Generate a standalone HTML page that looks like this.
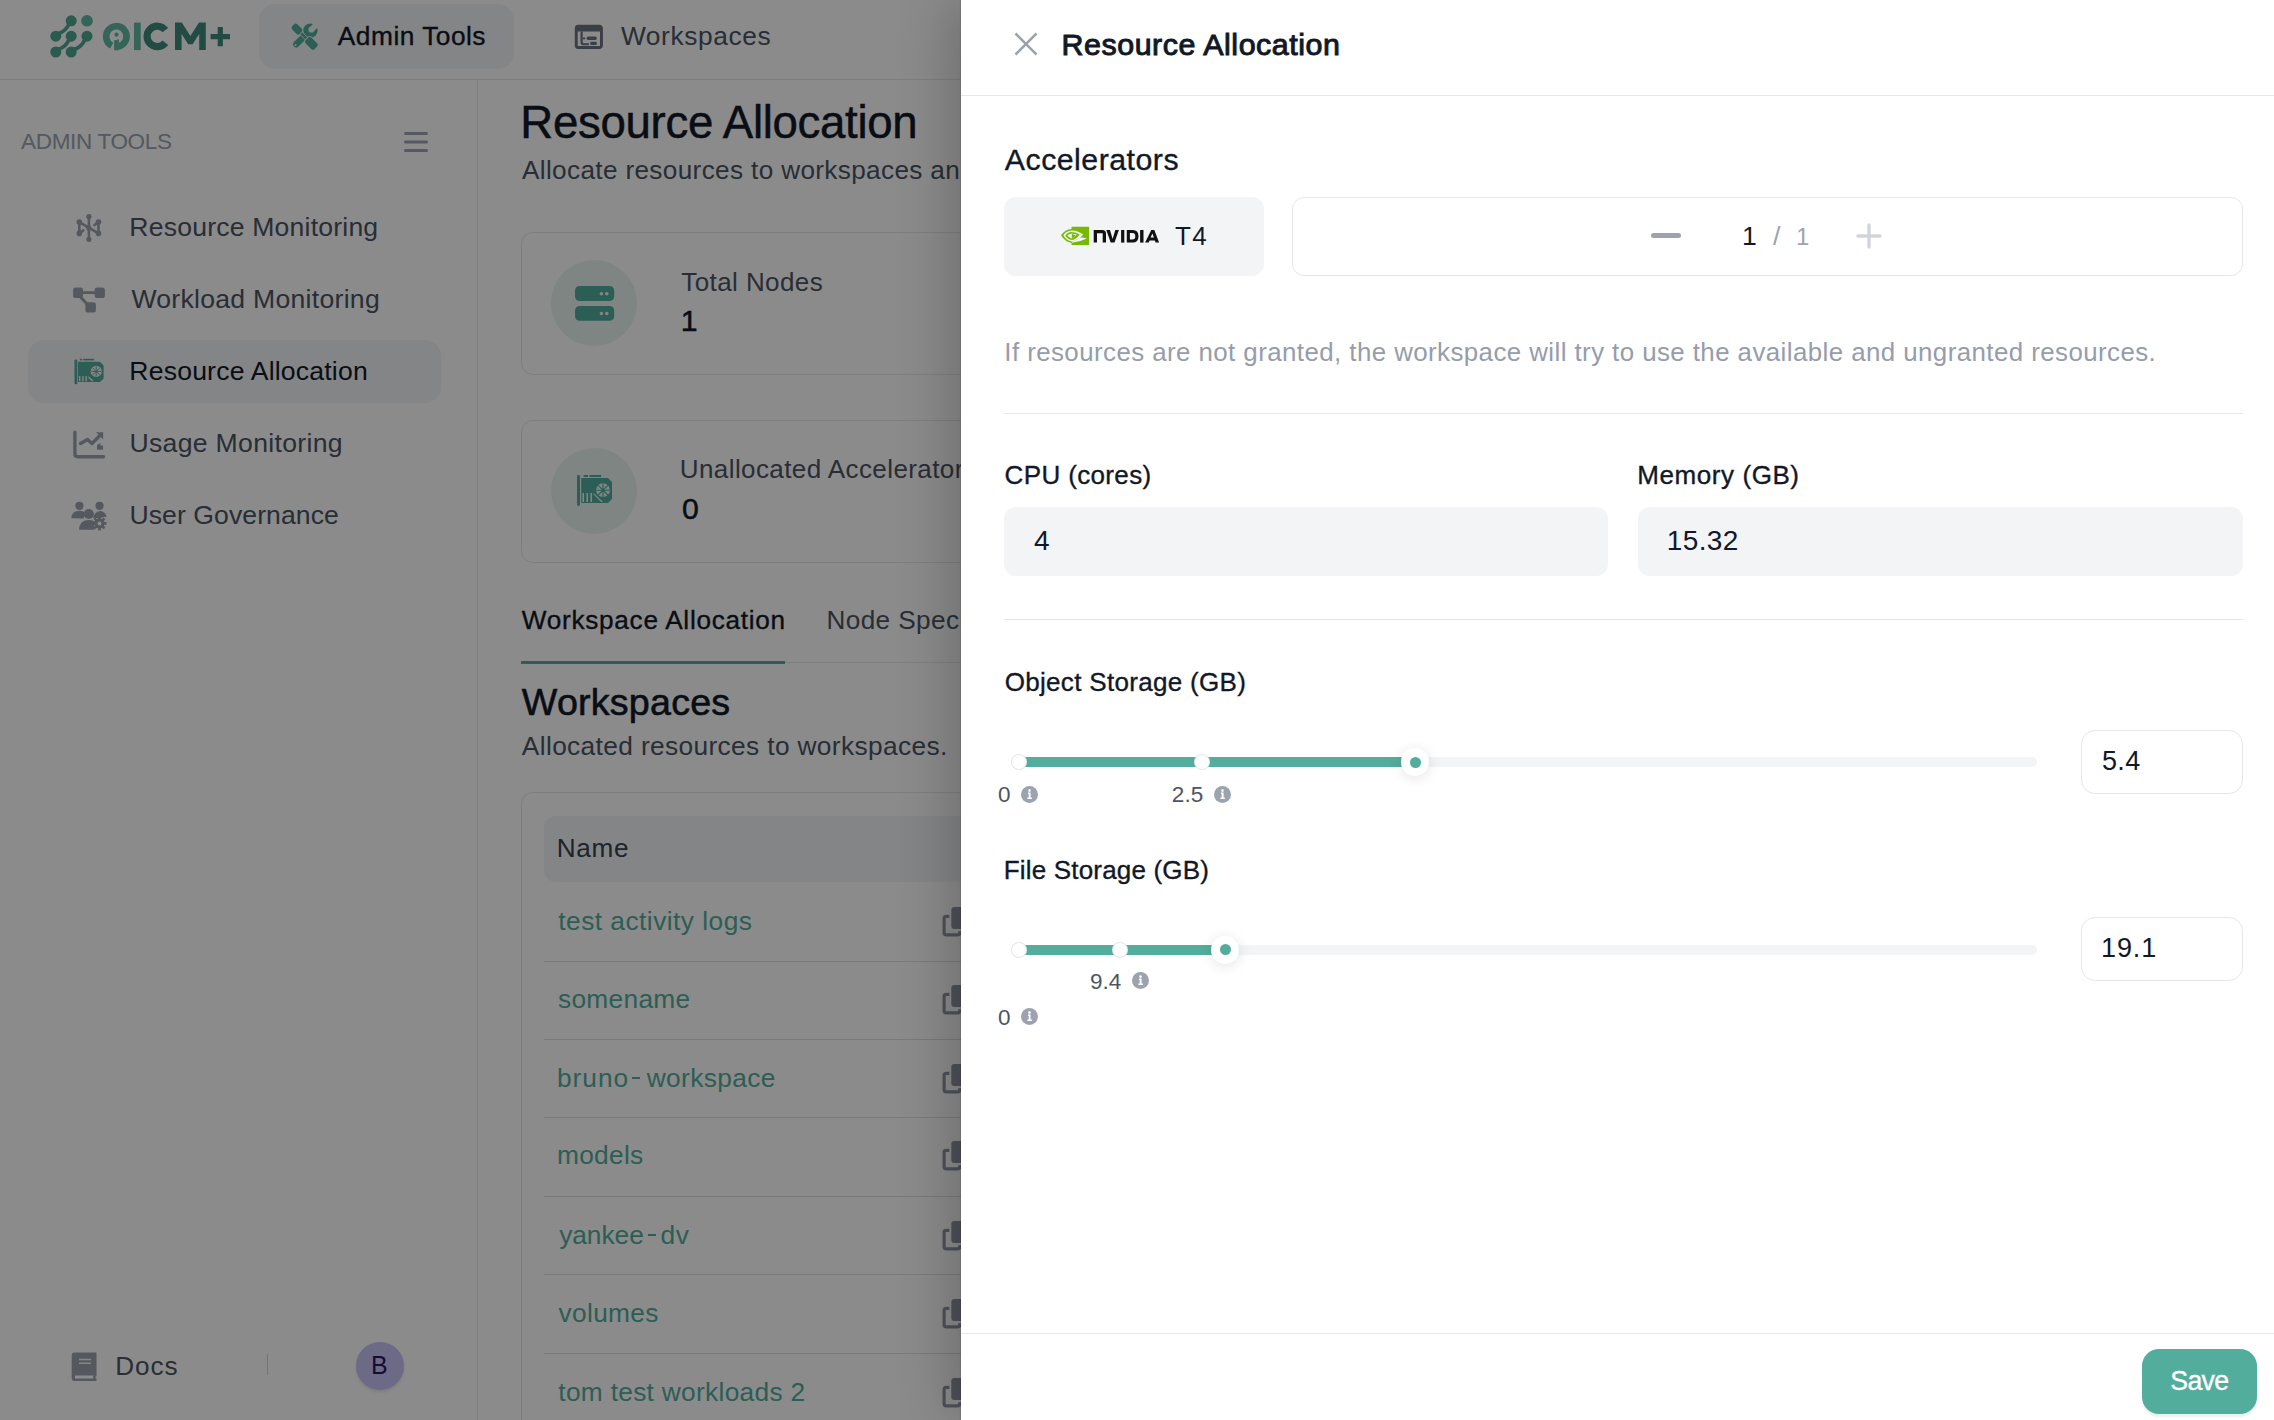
<!DOCTYPE html>
<html><head><meta charset="utf-8"><title>Resource Allocation</title>
<style>
html,body{margin:0;padding:0;width:2274px;height:1420px;overflow:hidden;background:#fff;font-family:"Liberation Sans",sans-serif;}
.abs{position:absolute;}
.t{position:absolute;white-space:nowrap;}
#page{position:absolute;left:0;top:0;width:2274px;height:1420px;overflow:hidden;background:#fff;}
#drawer{position:absolute;left:961px;top:0;width:1313px;height:1420px;background:#fff;box-shadow:-12px 0 50px rgba(0,0,0,0.2),-1px 0 1px rgba(0,0,0,0.07);overflow:hidden;}
</style></head><body>
<div id="page"><div class="abs" style="left:0;top:79px;width:2274px;height:1px;background:#e5e7eb"></div><svg class="abs" style="left:40px;top:5px" width="200" height="65" viewBox="40 5 200 65">
<g fill="#4fa592">
<circle cx="71.2" cy="20.8" r="5.5"/><circle cx="55.8" cy="36.2" r="5.5"/><circle cx="71.2" cy="36.2" r="5.5"/><circle cx="87" cy="36.2" r="5.5"/>
<circle cx="55.8" cy="52" r="5.5"/><circle cx="71.2" cy="52" r="5.5"/>
</g>
<circle cx="87" cy="20.8" r="5.8" fill="#62b8a4"/>
<g stroke="#4fa592" stroke-width="3.6" fill="none" stroke-linecap="round">
<path d="M69 24 Q 66 31, 58.5 33.5"/><path d="M69 39.5 Q 66 47, 58.5 49.3"/><path d="M84.8 39.5 Q 82 47, 74.2 49.3"/>
</g>
<g fill="none" stroke="#62b8a4" stroke-width="6.6">
<path d="M111.77 45.63 A10.25 10.25 0 1 1 118 46.6"/>
</g>
<g fill="#62b8a4">
<path d="M114.1 40.6 L118.9 39.2 V50.3 H114.1z"/>
<circle cx="116.5" cy="34.7" r="2.1"/>
<rect x="134" y="22.6" width="6.7" height="27.5"/>
</g>
<g fill="#3f8c7b">
<path d="M165.34 30.12 A10.2 10.2 0 1 0 165.34 42.68" fill="none" stroke="#3f8c7b" stroke-width="7.2"/>
<path d="M175 50.1 V22.6 H181.8 L190.4 36 L199 22.6 H205.8 V50.1 H199.2 V34 L192.6 44.2 H188.2 L181.6 34 V50.1z"/>
<path d="M217.7 27 h5.2 v7.05 h7.1 v5.2 h-7.1 v7.05 h-5.2 v-7.05 h-7.1 v-5.2 h7.1z"/>
</g>
</svg><div class="abs" style="left:259px;top:4px;width:255px;height:65px;border-radius:16px;background:#f3f4f6"></div><svg class="abs" style="left:290px;top:22px" width="30" height="30" viewBox="0 0 30 30">
<g fill="#52ad9c">
<rect x="-8.2" y="-3.2" width="16.4" height="6.4" rx="3.2" transform="translate(9.8 18.8) rotate(-45)"/>
<circle cx="20.4" cy="8.6" r="7.2"/>
</g>
<g fill="#f3f4f6">
<circle cx="21.3" cy="7.7" r="2.9"/>
<path d="M19.25 5.65 L23.35 9.75 L29.7 3.4 L25.6 -0.7z"/>
<circle cx="5.6" cy="23" r="1.1"/>
</g>
<g fill="#52ad9c" stroke="#f3f4f6" stroke-width="1.6" style="paint-order:stroke">
<rect x="-5.4" y="-3.6" width="10.8" height="7.2" rx="2.2" transform="translate(7 7.1) rotate(45)"/>
<rect x="-6.3" y="-4.1" width="12.6" height="8.2" rx="2.4" transform="translate(21.4 21.3) rotate(45)"/>
</g>
<rect x="-3.6" y="-1.3" width="7.2" height="2.6" transform="translate(13.7 13.8) rotate(45)" fill="#52ad9c" stroke="#f3f4f6" stroke-width="1.4" style="paint-order:stroke"/>
</svg><div class="t" style="left:337.85px;top:22.80px;font-size:26.31px;line-height:26px;color:#111827;letter-spacing:0.488px;-webkit-text-stroke:0.35px currentColor;">Admin Tools</div>
<svg class="abs" style="left:574px;top:24px" width="30" height="26" viewBox="0 0 30 26">
<g fill="#6b7280">
<path fill-rule="evenodd" d="M4 0.7 H25 Q28.9 0.7 28.9 4.6 V21 Q28.9 24.9 25 24.9 H4 Q0.8 24.9 0.8 21 V4.6 Q0.8 0.7 4 0.7z M3.7 7.5 V22 H26 V7.5z"/>
<path d="M6.5 7.5 h2.2 v10.5 q0 1.2 1.2 1.2 h5 v2 h-5.5 q-2.9 0 -2.9 -2.9z"/>
<path d="M8.7 13.5 h2.5 v1.8 h-2.5z"/>
<rect x="12.6" y="12.6" width="10.2" height="3.3" rx="1.6"/>
<rect x="16.2" y="17.8" width="6.6" height="3.2" rx="1.2"/>
</g></svg><div class="t" style="left:620.88px;top:22.80px;font-size:26.31px;line-height:26px;color:#4b5563;letter-spacing:0.623px;">Workspaces</div>
<div class="abs" style="left:477px;top:80px;width:1px;height:1340px;background:#e5e7eb"></div><div class="t" style="left:21.06px;top:129.70px;font-size:22.53px;line-height:23px;color:#9ca3af;letter-spacing:-0.343px;">ADMIN TOOLS</div>
<svg class="abs" style="left:403px;top:130px" width="26" height="24" viewBox="0 0 26 24"><g stroke="#9ca3af" stroke-width="3" stroke-linecap="round"><path d="M2.5 3.5h21M2.5 12h21M2.5 20.5h21"/></g></svg><div class="abs" style="left:28px;top:340px;width:413px;height:63px;border-radius:16px;background:#f3f4f6"></div><div class="t" style="left:129.32px;top:213.50px;font-size:26.60px;line-height:27px;color:#4b5563;letter-spacing:0.193px;">Resource Monitoring</div>
<div class="t" style="left:131.38px;top:285.50px;font-size:26.60px;line-height:27px;color:#4b5563;letter-spacing:0.272px;">Workload Monitoring</div>
<div class="t" style="left:129.32px;top:357.50px;font-size:26.60px;line-height:27px;color:#111827;letter-spacing:0.184px;">Resource Allocation</div>
<div class="t" style="left:129.45px;top:429.50px;font-size:26.60px;line-height:27px;color:#4b5563;letter-spacing:0.320px;">Usage Monitoring</div>
<div class="t" style="left:129.45px;top:501.50px;font-size:26.60px;line-height:27px;color:#4b5563;letter-spacing:0.070px;">User Governance</div>
<svg class="abs" style="left:70px;top:210px" width="40" height="36" viewBox="70 210 40 36">
<g fill="#9ca3af" stroke="#9ca3af" stroke-width="2.6" stroke-linecap="round">
<circle cx="88.9" cy="216.5" r="2.6" stroke="none"/><circle cx="88.9" cy="239.3" r="2.6" stroke="none"/>
<circle cx="79.3" cy="222.1" r="2.8" stroke="none"/><circle cx="79.3" cy="233.4" r="2.8" stroke="none"/>
<circle cx="98.5" cy="222.1" r="2.8" stroke="none"/><circle cx="98.5" cy="233.4" r="2.8" stroke="none"/>
<circle cx="88.9" cy="227.9" r="2.6" stroke="none"/>
<path d="M88.9 216.5V239.3M79.3 222.1L98.5 233.4M79.3 222.1V233.4M98.5 222.1V233.4M79.3 233.4l4 -3M98.5 222.1l-4 3" fill="none"/>
</g></svg><svg class="abs" style="left:70px;top:284px" width="40" height="32" viewBox="70 284 40 32">
<g fill="#9ca3af">
<rect x="73.1" y="287.5" width="9.9" height="10.5" rx="2.6"/><rect x="94.7" y="287.5" width="10.2" height="10.5" rx="2.6"/>
<rect x="85.4" y="302.3" width="10.5" height="10.2" rx="2.6"/>
<rect x="80" y="291.2" width="17" height="2.8"/>
</g>
<path d="M79.5 296 L88 305" stroke="#9ca3af" stroke-width="3" fill="none"/>
</svg><svg class="abs" style="left:72px;top:356px" width="36" height="32" viewBox="72 356 36 32">
<g fill="#52ad9c">
<rect x="74.5" y="359.4" width="2.8" height="24.8" rx="1.2"/>
<rect x="79.8" y="358.8" width="2.4" height="1.6"/><rect x="83.2" y="358.8" width="11" height="1.6"/>
<path fill-rule="evenodd" d="M78 361.8 H100 L103.6 365.5 V378.5 L100 382.1 H78z M96.2 371.4 m-5.6 0 a5.6 5.6 0 1 0 11.2 0 a5.6 5.6 0 1 0 -11.2 0z M79 376 v5.2 h1.4 v-5.2z M82.3 376 v5.2 h1.4 v-5.2z M85.5 376 v5.2 h1.4 v-5.2z M88.5 376 v2 l3.3 3.2 h2z"/>
<g stroke="#52ad9c" stroke-width="0.9"><path d="M96.2 366.5v9.8M91.3 371.4h9.8M92.7 367.9l7 7M99.7 367.9l-7 7"/></g>
</g></svg><svg class="abs" style="left:70px;top:428px" width="38" height="34" viewBox="70 428 38 34">
<g fill="none" stroke="#9ca3af" stroke-width="3.4" stroke-linecap="round" stroke-linejoin="round">
<path d="M74.9 432.2 V453.5 Q74.9 456.7 78 456.7 H103.5"/>
<path d="M80.5 443.5 L87.5 439.5 L92 443.5 L101 434.5"/>
</g>
<g fill="#9ca3af"><path d="M96 432.3 h7.2 v7.2z"/><path d="M97 445 l3.5 -2 v2.6 h2.6 v4.2 h-6.1z"/></g>
</svg><svg class="abs" style="left:68px;top:498px" width="42" height="36" viewBox="68 498 42 36">
<g fill="#9ca3af">
<circle cx="79.4" cy="505.8" r="4.1"/><circle cx="99.5" cy="505.8" r="4.1"/><circle cx="88.8" cy="514" r="5.1"/>
<path d="M71.2 518.2 Q72 510.8 79.4 510.8 Q84 510.8 85.5 514 Q83 518.5 84 518.5z"/>
<path d="M79 529.8 Q79.5 520 88.8 520 Q93.5 520 95.5 522 Q93.2 526 94.5 529.8z"/>
<path d="M93 518.2 Q94 512.5 99.5 511 Q104.8 511 106.7 516.5 L100 518z"/>
</g>
<g transform="translate(99.5 523.4)" fill="#9ca3af">
<circle r="5"/>
<g stroke="#9ca3af" stroke-width="2.6"><path d="M0 -7V7M-7 0H7M-5 -5L5 5M5 -5L-5 5"/></g>
<circle r="2" fill="#ffffff"/>
</g></svg><svg class="abs" style="left:70px;top:1350px" width="30" height="34" viewBox="70 1350 30 34">
<g fill="#9ca3af"><path fill-rule="evenodd" d="M74.5 1352.5 H96.5 V1376 Q94 1377 96.5 1378.5 V1381 H74.5 Q71.7 1381 71.7 1378 V1355.5 Q71.7 1352.5 74.5 1352.5z M75 1375.5 v3 h18.5 q-1 -1.5 0 -3z"/></g>
<g stroke="#f3f4f6" stroke-width="1.6"><path d="M79 1359.5h12M79 1363.2h12"/></g>
</svg><div class="t" style="left:115.25px;top:1353.00px;font-size:26.16px;line-height:26px;color:#4b5563;letter-spacing:0.928px;">Docs</div>
<div class="abs" style="left:267px;top:1354px;width:1px;height:21px;background:#d1d5db"></div><div class="abs" style="left:356px;top:1342px;width:48px;height:48px;border-radius:50%;background:#c9c3f7;box-shadow:0 2px 3px rgba(0,0,0,0.1)"></div><div class="t" style="left:370.95px;top:1353.00px;font-size:25.00px;line-height:25px;color:#271763;">B</div>
<div class="t" style="left:520.36px;top:100.30px;font-size:45.64px;line-height:46px;color:#111827;letter-spacing:-0.332px;-webkit-text-stroke:0.5px currentColor;">Resource Allocation</div>
<div class="t" style="left:521.95px;top:157.00px;font-size:26.16px;line-height:26px;color:#4b5563;letter-spacing:0.35px;">Allocate resources to workspaces and users.</div>
<div class="abs" style="left:521px;top:232px;width:700px;height:143px;border:1px solid #e5e7eb;border-radius:12px;box-sizing:border-box"></div><div class="abs" style="left:551px;top:260px;width:86px;height:86px;border-radius:50%;background:#e8f5f1"></div><div class="t" style="left:681.22px;top:268.70px;font-size:26.02px;line-height:26px;color:#4b5563;letter-spacing:0.413px;">Total Nodes</div>
<div class="t" style="left:680.80px;top:306.20px;font-size:30.23px;line-height:30px;color:#111827;-webkit-text-stroke:0.5px currentColor;">1</div>
<div class="abs" style="left:521px;top:419.7px;width:700px;height:143px;border:1px solid #e5e7eb;border-radius:12px;box-sizing:border-box"></div><div class="abs" style="left:551px;top:447.7px;width:86px;height:86px;border-radius:50%;background:#e8f5f1"></div><div class="t" style="left:679.79px;top:456.40px;font-size:26.02px;line-height:26px;color:#4b5563;letter-spacing:0.4px;">Unallocated Accelerators</div>
<div class="t" style="left:681.92px;top:493.90px;font-size:30.23px;line-height:30px;color:#111827;-webkit-text-stroke:0.5px currentColor;">0</div>
<svg class="abs" style="left:570px;top:282px" width="50" height="44" viewBox="570 282 50 44">
<g fill="#52ad9c">
<path fill-rule="evenodd" d="M580 286 H609 Q614.2 286 614.2 291 V296 Q614.2 301 609 301 H580 Q575 301 575 296 V291 Q575 286 580 286z M601.4 293.7 m-1.8 0 a1.8 1.8 0 1 0 3.6 0 a1.8 1.8 0 1 0 -3.6 0z M606.8 293.7 m-1.8 0 a1.8 1.8 0 1 0 3.6 0 a1.8 1.8 0 1 0 -3.6 0z"/>
<path fill-rule="evenodd" d="M580 306 H609 Q614.2 306 614.2 311 V316 Q614.2 320.8 609 320.8 H580 Q575 320.8 575 316 V311 Q575 306 580 306z M601.4 313.5 m-1.8 0 a1.8 1.8 0 1 0 3.6 0 a1.8 1.8 0 1 0 -3.6 0z M606.8 313.5 m-1.8 0 a1.8 1.8 0 1 0 3.6 0 a1.8 1.8 0 1 0 -3.6 0z"/>
</g></svg><svg class="abs" style="left:572px;top:470px" width="46" height="40" viewBox="572 470 46 40">
<g fill="#52ad9c">
<rect x="577" y="475.1" width="3" height="30.7" rx="1.3"/>
<rect x="583.6" y="475" width="4.4" height="2"/><rect x="589.5" y="475" width="11.7" height="2"/>
<path fill-rule="evenodd" d="M581.2 478 H608 L612 482 V499 L608 503 H581.2z M603 490.2 m-6.9 0 a6.9 6.9 0 1 0 13.8 0 a6.9 6.9 0 1 0 -13.8 0z M582.4 493 v9 h1.6 v-9z M586.4 493 v9 h1.6 v-9z M590.4 493 v9 h1.6 v-9z M593.6 493 v1.5 l7.5 7.5 h2z"/>
<g stroke="#52ad9c" stroke-width="1.1"><path d="M603 483.5v13.4M596.3 490.2h13.4M598.2 485.4l9.6 9.6M607.8 485.4l-9.6 9.6"/></g>
</g></svg><div class="t" style="left:521.79px;top:606.70px;font-size:26.16px;line-height:26px;color:#111827;letter-spacing:0.725px;-webkit-text-stroke:0.35px currentColor;">Workspace Allocation</div>
<div class="t" style="left:826.45px;top:606.70px;font-size:26.16px;line-height:26px;color:#4b5563;letter-spacing:0.4px;">Node Specifications</div>
<div class="abs" style="left:521px;top:661.5px;width:700px;height:1px;background:#e5e7eb"></div><div class="abs" style="left:521px;top:660.5px;width:264px;height:3.5px;background:#52ad9c"></div><div class="t" style="left:521.83px;top:682.90px;font-size:37.65px;line-height:38px;color:#111827;letter-spacing:0.211px;-webkit-text-stroke:0.6px currentColor;">Workspaces</div>
<div class="t" style="left:521.85px;top:732.80px;font-size:26.31px;line-height:26px;color:#4b5563;letter-spacing:0.356px;">Allocated resources to workspaces.</div>
<div class="abs" style="left:521px;top:792px;width:700px;height:700px;border:1px solid #e5e7eb;border-radius:12px;box-sizing:border-box"></div><div class="abs" style="left:544px;top:815.5px;width:700px;height:66.5px;border-radius:12px;background:#f3f4f6"></div><div class="t" style="left:556.85px;top:834.50px;font-size:26.16px;line-height:26px;color:#374151;letter-spacing:0.607px;">Name</div>
<div class="abs" style="left:544px;top:961px;width:700px;height:1px;background:#dcdfe5"></div><div class="abs" style="left:544px;top:1039px;width:700px;height:1px;background:#dcdfe5"></div><div class="abs" style="left:544px;top:1117px;width:700px;height:1px;background:#dcdfe5"></div><div class="abs" style="left:544px;top:1196px;width:700px;height:1px;background:#dcdfe5"></div><div class="abs" style="left:544px;top:1274px;width:700px;height:1px;background:#dcdfe5"></div><div class="abs" style="left:544px;top:1353px;width:700px;height:1px;background:#dcdfe5"></div><div class="t" style="left:558.30px;top:908.00px;font-size:26.30px;line-height:26px;color:#52ad9c;letter-spacing:0.472px;">test activity logs</div>
<svg class="abs" style="left:940px;top:907.1px" width="30" height="32" viewBox="0 0 30 32">
<path d="M9.4 9.3 H6.2 Q4.1 9.3 4.1 11.4 V25.7 Q4.1 27.8 6.2 27.8 H17.6 Q19.7 27.8 19.7 25.7 V24.3" fill="none" stroke="#8f96a3" stroke-width="3.2"/>
<rect x="11.3" y="0" width="20" height="22" rx="3" fill="#8f96a3"/></svg><div class="t" style="left:557.97px;top:986.00px;font-size:26.30px;line-height:26px;color:#52ad9c;letter-spacing:0.3px;">somename</div>
<svg class="abs" style="left:940px;top:985.1px" width="30" height="32" viewBox="0 0 30 32">
<path d="M9.4 9.3 H6.2 Q4.1 9.3 4.1 11.4 V25.7 Q4.1 27.8 6.2 27.8 H17.6 Q19.7 27.8 19.7 25.7 V24.3" fill="none" stroke="#8f96a3" stroke-width="3.2"/>
<rect x="11.3" y="0" width="20" height="22" rx="3" fill="#8f96a3"/></svg><div class="t" style="left:557.00px;top:1064.60px;font-size:26.30px;line-height:26px;color:#52ad9c;letter-spacing:0.959px;">bruno</div>
<div class="abs" style="left:631.9px;top:1077.0px;width:8.2px;height:2.3px;background:#52ad9c"></div><div class="t" style="left:646.74px;top:1064.60px;font-size:26.30px;line-height:26px;color:#52ad9c;letter-spacing:0.378px;">workspace</div>
<svg class="abs" style="left:940px;top:1063.6999999999998px" width="30" height="32" viewBox="0 0 30 32">
<path d="M9.4 9.3 H6.2 Q4.1 9.3 4.1 11.4 V25.7 Q4.1 27.8 6.2 27.8 H17.6 Q19.7 27.8 19.7 25.7 V24.3" fill="none" stroke="#8f96a3" stroke-width="3.2"/>
<rect x="11.3" y="0" width="20" height="22" rx="3" fill="#8f96a3"/></svg><div class="t" style="left:556.95px;top:1142.00px;font-size:26.30px;line-height:26px;color:#52ad9c;letter-spacing:0.3px;">models</div>
<svg class="abs" style="left:940px;top:1141.1px" width="30" height="32" viewBox="0 0 30 32">
<path d="M9.4 9.3 H6.2 Q4.1 9.3 4.1 11.4 V25.7 Q4.1 27.8 6.2 27.8 H17.6 Q19.7 27.8 19.7 25.7 V24.3" fill="none" stroke="#8f96a3" stroke-width="3.2"/>
<rect x="11.3" y="0" width="20" height="22" rx="3" fill="#8f96a3"/></svg><div class="t" style="left:559.14px;top:1221.70px;font-size:26.30px;line-height:26px;color:#52ad9c;letter-spacing:-0.015px;">yankee</div>
<div class="abs" style="left:648.3px;top:1234.1000000000001px;width:7.6px;height:2.3px;background:#52ad9c"></div><div class="t" style="left:660.40px;top:1221.70px;font-size:26.30px;line-height:26px;color:#52ad9c;letter-spacing:0.817px;">dv</div>
<svg class="abs" style="left:940px;top:1220.8px" width="30" height="32" viewBox="0 0 30 32">
<path d="M9.4 9.3 H6.2 Q4.1 9.3 4.1 11.4 V25.7 Q4.1 27.8 6.2 27.8 H17.6 Q19.7 27.8 19.7 25.7 V24.3" fill="none" stroke="#8f96a3" stroke-width="3.2"/>
<rect x="11.3" y="0" width="20" height="22" rx="3" fill="#8f96a3"/></svg><div class="t" style="left:558.61px;top:1300.00px;font-size:26.30px;line-height:26px;color:#52ad9c;letter-spacing:0.3px;">volumes</div>
<svg class="abs" style="left:940px;top:1299.1px" width="30" height="32" viewBox="0 0 30 32">
<path d="M9.4 9.3 H6.2 Q4.1 9.3 4.1 11.4 V25.7 Q4.1 27.8 6.2 27.8 H17.6 Q19.7 27.8 19.7 25.7 V24.3" fill="none" stroke="#8f96a3" stroke-width="3.2"/>
<rect x="11.3" y="0" width="20" height="22" rx="3" fill="#8f96a3"/></svg><div class="t" style="left:558.30px;top:1379.00px;font-size:26.30px;line-height:26px;color:#52ad9c;letter-spacing:0.3px;">tom test workloads 2</div>
<svg class="abs" style="left:940px;top:1378.1px" width="30" height="32" viewBox="0 0 30 32">
<path d="M9.4 9.3 H6.2 Q4.1 9.3 4.1 11.4 V25.7 Q4.1 27.8 6.2 27.8 H17.6 Q19.7 27.8 19.7 25.7 V24.3" fill="none" stroke="#8f96a3" stroke-width="3.2"/>
<rect x="11.3" y="0" width="20" height="22" rx="3" fill="#8f96a3"/></svg></div><div class="abs" style="left:0;top:0;width:2274px;height:1420px;background:rgba(0,0,0,0.455)"></div><div id="drawer"><svg class="abs" style="left:53.4px;top:32.3px" width="24" height="24" viewBox="0 0 24 24"><path d="M2.4 2.4L21.6 21.6M21.6 2.4L2.4 21.6" stroke="#9ca3af" stroke-width="2.6" stroke-linecap="square"/></svg><div class="t" style="left:100.51px;top:28.90px;font-size:30.38px;line-height:30px;color:#111827;letter-spacing:0.554px;-webkit-text-stroke:1.0px currentColor;">Resource Allocation</div>
<div class="abs" style="left:0;top:95px;width:1313px;height:1px;background:#e5e7eb"></div><div class="t" style="left:43.84px;top:145.35px;font-size:30.31px;line-height:30px;color:#111827;letter-spacing:0.484px;-webkit-text-stroke:0.35px currentColor;">Accelerators</div>
<div class="abs" style="left:43px;top:197px;width:260px;height:79px;border-radius:12px;background:#f3f4f6"></div><svg class="abs" style="left:99px;top:225px" width="30" height="22" viewBox="1060 225 30 22">
<path d="M1071.5 226.7 H1089.1 V245 H1071.5 V242.9 Q1065 242 1061 235.3 Q1065 229.2 1071.5 228.9z" fill="#76b900"/>
<path d="M1063.3 235.3 Q1066.5 230.6 1071.5 230.4 Q1079 230.6 1083.2 234.6 Q1079 240.3 1071.8 241.5 Q1066.5 240.5 1063.3 235.3z" fill="#f3f4f6"/>
<path d="M1065.2 235.5 Q1067.5 232.2 1071.5 231.9 Q1076.5 232.2 1079.6 234.4 Q1076.5 239 1071.8 240 Q1067.5 239.2 1065.2 235.5z" fill="#76b900"/>
<path d="M1067.2 235.6 Q1069 233.6 1071.5 233.4 Q1074 233.6 1076.8 234.5 Q1074 237.5 1071.8 238.5 Q1069 237.8 1067.2 235.6z" fill="#f3f4f6"/>
<path d="M1071.8 233.9 Q1074 234.2 1075.3 235.4 Q1074.5 237.6 1071.8 238.1z" fill="#76b900"/>
<path d="M1071.8 242.7 Q1080 241.8 1086.9 238.4 Q1083 237.3 1080.5 237.5 Q1076 240.8 1071.8 241.7z" fill="#f3f4f6"/>
</svg><svg class="abs" style="left:129px;top:228px" width="72" height="17" viewBox="1090 228 72 17"><g fill="#111111">
<path d="M1093.7 242.6 V230 H1102.3 Q1106 230 1106 233.7 V242.6 H1102.7 V233.3 H1097 V242.6z"/>
<path d="M1106.3 230 H1110 L1112.6 239 L1115.3 230 H1118.9 L1114.5 242.6 H1110.7z"/>
<rect x="1121.1" y="230" width="3.2" height="12.6"/>
<path fill-rule="evenodd" d="M1126.8 230 H1132.6 Q1138.5 230 1138.5 236.3 Q1138.5 242.6 1132.6 242.6 H1126.8z M1129.9 233 V239.6 H1132.3 Q1135.3 239.6 1135.3 236.3 Q1135.3 233 1132.3 233z"/>
<rect x="1140.1" y="230" width="3.4" height="12.6"/>
<path fill-rule="evenodd" d="M1145.1 242.6 L1151.3 230 H1154.3 L1159.1 242.6 H1155.6 L1154.8 240.4 H1149.6 L1148.7 242.6z M1150.6 237.6 H1153.9 L1152.4 233.6z"/>
</g></svg><div class="t" style="left:214.02px;top:223.00px;font-size:26.02px;line-height:26px;color:#111827;letter-spacing:1.284px;">T4</div>
<div class="abs" style="left:331px;top:197px;width:951px;height:79px;border-radius:12px;border:1px solid #e5e7eb;box-sizing:border-box"></div><div class="abs" style="left:690px;top:233px;width:30px;height:5px;border-radius:3px;background:#9ca3af"></div><div class="t" style="left:780.97px;top:222.50px;font-size:26.60px;line-height:27px;color:#111827;">1</div>
<div class="t" style="left:812.00px;top:222.50px;font-size:26.60px;line-height:27px;color:#9ca3af;">/</div>
<div class="t" style="left:835.23px;top:225.50px;font-size:23.26px;line-height:23px;color:#9ca3af;">1</div>
<svg class="abs" style="left:895px;top:223px" width="26" height="26" viewBox="0 0 26 26"><path d="M13 2V24M2 13H24" stroke="#d1d5db" stroke-width="3.4" stroke-linecap="round"/></svg><div class="t" style="left:43.31px;top:338.70px;font-size:25.87px;line-height:26px;color:#959cab;letter-spacing:0.431px;">If resources are not granted, the workspace will try to use the available and ungranted resources.</div>
<div class="abs" style="left:43px;top:413px;width:1239px;height:1px;background:#e5e7eb"></div><div class="t" style="left:43.58px;top:461.70px;font-size:26.02px;line-height:26px;color:#111827;letter-spacing:0.353px;-webkit-text-stroke:0.35px currentColor;">CPU (cores)</div>
<div class="t" style="left:676.37px;top:461.70px;font-size:26.02px;line-height:26px;color:#111827;letter-spacing:0.554px;-webkit-text-stroke:0.35px currentColor;">Memory (GB)</div>
<div class="abs" style="left:43px;top:507px;width:604px;height:69px;border-radius:12px;background:#f3f4f6"></div><div class="abs" style="left:677px;top:507px;width:605px;height:69px;border-radius:12px;background:#f3f4f6"></div><div class="t" style="left:72.96px;top:526.70px;font-size:28.00px;line-height:28px;color:#111827;">4</div>
<div class="t" style="left:705.67px;top:526.70px;font-size:28.00px;line-height:28px;color:#111827;letter-spacing:0.418px;">15.32</div>
<div class="abs" style="left:43px;top:619px;width:1239px;height:1px;background:#e5e7eb"></div><div class="t" style="left:43.67px;top:668.70px;font-size:26.02px;line-height:26px;color:#111827;letter-spacing:0.308px;-webkit-text-stroke:0.35px currentColor;">Object Storage (GB)</div>
<div class="abs" style="left:51px;top:757px;width:1025px;height:10px;border-radius:5px;background:#f3f4f6"></div><div class="abs" style="left:51px;top:757px;width:403px;height:10px;border-radius:5px;background:#52ad9c"></div><div class="abs" style="left:51px;top:755px;width:14px;height:14px;border-radius:50%;background:#fff;box-shadow:0 0 0 1px #e5e7eb"></div><div class="abs" style="left:234px;top:755px;width:14px;height:14px;border-radius:50%;background:#fff;box-shadow:0 0 0 1px #e5e7eb"></div><div class="abs" style="left:440px;top:748px;width:28px;height:28px;border-radius:50%;background:#fff;box-shadow:0 2px 14px rgba(0,0,0,0.11)"></div><div class="abs" style="left:448.5px;top:756.5px;width:11px;height:11px;border-radius:50%;background:#52ad9c"></div><div class="t" style="left:37.12px;top:783.00px;font-size:22.53px;line-height:23px;color:#4b5563;">0</div>
<svg class="abs" style="left:59.5px;top:785.5px" width="17" height="17" viewBox="0 0 17 17"><circle cx="8.5" cy="8.5" r="8.5" fill="#9ca3af"/><path d="M7 6.6h2.6v4.9h1.3v1.4H6.4v-1.4h1.3V8H7z" fill="#fff"/><circle cx="8.5" cy="4.6" r="1.3" fill="#fff"/></svg><div class="t" style="left:210.87px;top:783.00px;font-size:22.53px;line-height:23px;color:#4b5563;">2.5</div>
<svg class="abs" style="left:252.5px;top:785.5px" width="17" height="17" viewBox="0 0 17 17"><circle cx="8.5" cy="8.5" r="8.5" fill="#9ca3af"/><path d="M7 6.6h2.6v4.9h1.3v1.4H6.4v-1.4h1.3V8H7z" fill="#fff"/><circle cx="8.5" cy="4.6" r="1.3" fill="#fff"/></svg><div class="abs" style="left:1120px;top:730px;width:162px;height:64px;border-radius:14px;border:1px solid #e5e7eb;box-sizing:border-box"></div><div class="t" style="left:1140.92px;top:748.00px;font-size:27.00px;line-height:27px;color:#111827;letter-spacing:0.369px;">5.4</div>
<div class="t" style="left:42.77px;top:856.60px;font-size:26.02px;line-height:26px;color:#111827;letter-spacing:0.170px;-webkit-text-stroke:0.35px currentColor;">File Storage (GB)</div>
<div class="abs" style="left:51px;top:944.5px;width:1025px;height:10px;border-radius:5px;background:#f3f4f6"></div><div class="abs" style="left:51px;top:944.5px;width:213px;height:10px;border-radius:5px;background:#52ad9c"></div><div class="abs" style="left:51px;top:942.5px;width:14px;height:14px;border-radius:50%;background:#fff;box-shadow:0 0 0 1px #e5e7eb"></div><div class="abs" style="left:152px;top:942.5px;width:14px;height:14px;border-radius:50%;background:#fff;box-shadow:0 0 0 1px #e5e7eb"></div><div class="abs" style="left:250px;top:935.5px;width:28px;height:28px;border-radius:50%;background:#fff;box-shadow:0 2px 14px rgba(0,0,0,0.11)"></div><div class="abs" style="left:258.5px;top:944.0px;width:11px;height:11px;border-radius:50%;background:#52ad9c"></div><div class="t" style="left:128.94px;top:970.00px;font-size:22.53px;line-height:23px;color:#4b5563;">9.4</div>
<svg class="abs" style="left:170.5px;top:972.1px" width="17" height="17" viewBox="0 0 17 17"><circle cx="8.5" cy="8.5" r="8.5" fill="#9ca3af"/><path d="M7 6.6h2.6v4.9h1.3v1.4H6.4v-1.4h1.3V8H7z" fill="#fff"/><circle cx="8.5" cy="4.6" r="1.3" fill="#fff"/></svg><div class="t" style="left:37.12px;top:1006.00px;font-size:22.53px;line-height:23px;color:#4b5563;">0</div>
<svg class="abs" style="left:59.5px;top:1008.1px" width="17" height="17" viewBox="0 0 17 17"><circle cx="8.5" cy="8.5" r="8.5" fill="#9ca3af"/><path d="M7 6.6h2.6v4.9h1.3v1.4H6.4v-1.4h1.3V8H7z" fill="#fff"/><circle cx="8.5" cy="4.6" r="1.3" fill="#fff"/></svg><div class="abs" style="left:1120px;top:917px;width:162px;height:64px;border-radius:14px;border:1px solid #e5e7eb;box-sizing:border-box"></div><div class="t" style="left:1139.94px;top:935.00px;font-size:27.00px;line-height:27px;color:#111827;letter-spacing:0.942px;">19.1</div>
<div class="abs" style="left:0;top:1333px;width:1313px;height:1px;background:#e5e7eb"></div><div class="abs" style="left:1181px;top:1349px;width:115px;height:65px;border-radius:17px;background:#52ad9c;box-shadow:0 3px 2px rgba(82,173,156,0.15)"></div><div class="t" style="left:1209.29px;top:1367.50px;font-size:26.74px;line-height:27px;color:#ffffff;letter-spacing:-0.685px;-webkit-text-stroke:0.35px currentColor;">Save</div>
</div>
</body></html>
